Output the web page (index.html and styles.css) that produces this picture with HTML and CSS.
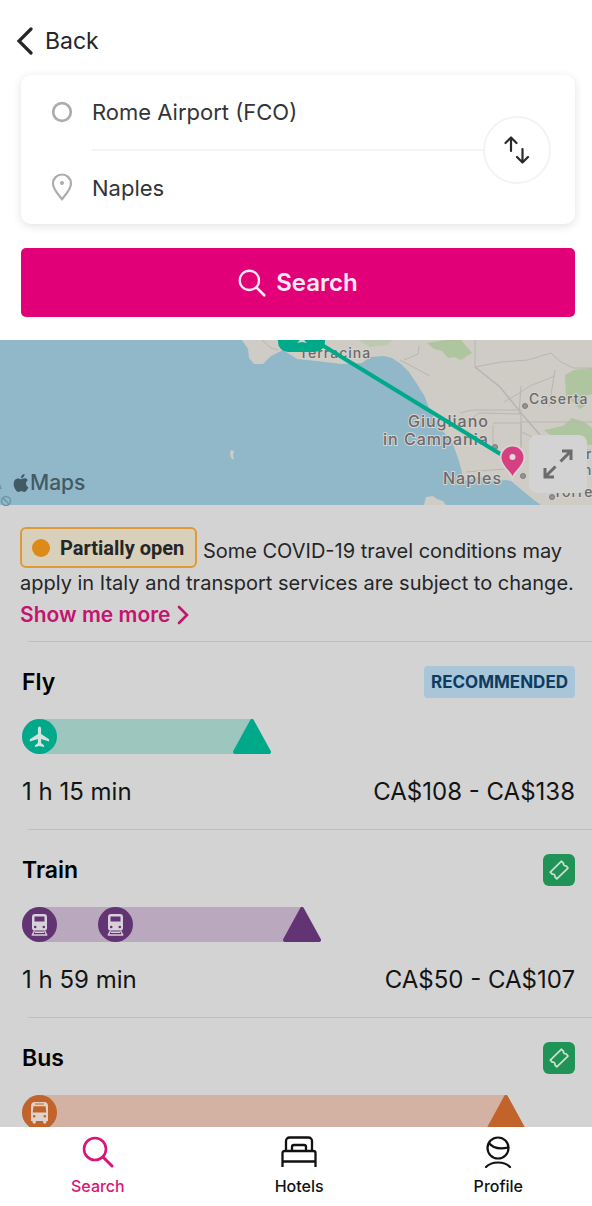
FILE: index.html
```html
<!DOCTYPE html>
<html lang="en">
<head>
    <meta charset="UTF-8">
    <meta name="viewport" content="width=device-width, initial-scale=1.0">
    <title>Rome Airport (FCO) to Naples</title>
    <link rel="stylesheet" href="styles.css">
</head>
<body>

<!-- shared icons -->
<svg class="sprite" aria-hidden="true">
    <symbol id="icon-search" viewBox="0 0 32 32">
        <circle cx="13" cy="13" r="11" fill="none" stroke="currentColor" stroke-width="2.6"/>
        <path d="M21 21l9 9" fill="none" stroke="currentColor" stroke-width="3" stroke-linecap="round"/>
    </symbol>
    <symbol id="icon-train" viewBox="0 0 35 35">
        <circle cx="17.5" cy="17.5" r="17.5" fill="#633473"/>
        <path fill="#d8d0da" fill-rule="evenodd" d="M13 7h9a3 3 0 0 1 3 3v11a2.500 2.500 0 0 1-2.500 2.500h-10a2.500 2.500 0 0 1-2.500-2.500v-11a3 3 0 0 1 3-3zM12.500 9.500v5h10v-5zM13.200 18.700a1.300 1.300 0 1 0 0 2.600 1.300 1.300 0 1 0 0-2.600zM21.800 18.700a1.300 1.300 0 1 0 0 2.600 1.300 1.300 0 1 0 0-2.600z"/>
        <path d="M12.500 23.500l-2.500 5M22.500 23.500l2.500 5M13 25.300h9M10 28h15" fill="none" stroke="#d8d0da" stroke-width="1.400"/>
    </symbol>
    <symbol id="icon-ticket" viewBox="0 0 32 32">
        <rect width="32" height="32" rx="6" fill="#209457"/>
        <path d="M18.500 7.200l2 2.200c-.3 1.600 1 2.900 2.800 2.500l1.700 2.200-11.200 10.700-1.900-2c.4-1.700-1-3-2.700-2.600l-1.900-2z" fill="none" stroke="#c8e3cf" stroke-width="1.700" stroke-linejoin="round"/>
    </symbol>
    <symbol id="icon-arrive" viewBox="0 0 38 35">
        <path d="M19 2L36 33H2z" fill="currentColor" stroke="currentColor" stroke-width="4" stroke-linejoin="round"/>
    </symbol>
</svg>

<div class="app">
    <header class="search-panel">
        <a class="back" href="#">
            <svg width="18" height="28" viewBox="0 0 18 28"><path d="M15 2L3 14l12 12" fill="none" stroke="currentColor" stroke-width="3.200" stroke-linecap="round"/></svg>
            Back
        </a>

        <form onsubmit="return false">
            <div class="places">
                <div class="place">
                    <label for="origin" aria-label="From">
                        <svg width="22" height="26" viewBox="0 0 22 26"><circle cx="11" cy="13" r="8.800" fill="none" stroke="#acacac" stroke-width="2.700"/></svg>
                    </label>
                    <input type="text" id="origin" value="Rome Airport (FCO)">
                </div>
                <div class="place">
                    <label for="destination" aria-label="To">
                        <svg width="22" height="28" viewBox="0 0 22 28"><path d="M11 26.300C8 22 2 16.500 2 10.500a9 9 0 0 1 18 0c0 6-6 11.500-9 15.800z" fill="none" stroke="#acacac" stroke-width="2.200" stroke-linejoin="round"/><circle cx="11" cy="10" r="2" fill="#acacac"/></svg>
                    </label>
                    <input type="text" id="destination" value="Naples">
                </div>
                <button class="swap" type="button" aria-label="Swap places">
                    <svg width="26" height="28" viewBox="0 0 26 28"><path d="M7 15V2M1.500 7L7 1.500 12.500 7M18.500 13v13M13 21l5.500 5.500L24 21" fill="none" stroke="#272b2d" stroke-width="2.200" stroke-linecap="round" stroke-linejoin="round"/></svg>
                </button>
            </div>
            <button class="search-btn" type="submit">
                <svg width="28" height="28"><use href="#icon-search"/></svg>
                Search
            </button>
        </form>
    </header>

    <main>
        <section class="map">
            <svg class="map-canvas" viewBox="0 0 592 165" preserveAspectRatio="xMaxYMid slice">
                <rect width="592" height="165" fill="#90b8c8"/>
                <g fill="#cfccc6">
                    <path d="M242 0l6 9 1 9 5 6h9l8-8 12-6 14 9 20 2 24 3 21-1 8-6 14-1 8 2 9 6 8 8 8 12 8 13 5 14 11 18 11 13 6 16 4 14 1 9 9-2 12-3 11 5 10-1 6 1 12 10 11 9 11 8h50V0z"/>
                    <path d="M424 165l2-8 7-1 4 3 6 2 3 4z"/>
                    <path d="M231 110l3 1-1 4 1 5-3-2-1-5z"/>
                </g>
                <g fill="#aec59f">
                    <path d="M427 3l18-3h16l5 6 6 7-11 7-7-3-6 1-6-7-8-2z"/>
                    <path d="M358 0h34l-4 5-18 2z" opacity=".5"/>
                    <path d="M565 35l9-5 18-2v26l-9 3 3 8-6 4-9-9-5-2z"/>
                    <path d="M544 90l19-4 9-8 12 4 8 6v17h-30z"/>
                </g>
                <g fill="none" stroke="#b9b5b2">
                    <path d="M475 0v27l25 20 22 27 18 21 26 15M475 27l26-5 27-2 23-7 10 9 12 6h19M521 46l-2 28M555 30l-6 37M504 62l14-8 12-8 25-10M521 74v52l-12 3M493 83h28v28M493 85v27h19M521 82h71M522 92l30 15 40 3M460 73l12-3h50M404 20l14-6 1-8M262 0l9 8 7 2M400 20l30 16M466 132l40-3M463 85l16-12 42 1M531 98v36" stroke-width="1"/>
                    <path d="M475 27l25 20 22 27M540 95l-18-21" stroke-width="1.600"/>
                </g>
                <g fill="#969492" stroke="#7c7a79" stroke-width="1">
                    <circle cx="525" cy="66" r="2.500"/>
                    <circle cx="495" cy="107" r="2.500"/>
                    <circle cx="523" cy="136" r="2.500"/>
                    <circle cx="552" cy="157" r="2.500"/>
                </g>
                <g class="map-labels">
                    <text class="small" x="299" y="18">Terracina</text>
                    <text class="small" x="529" y="64">Caserta</text>
                    <text x="408" y="87">Giugliano</text>
                    <text x="383" y="105">in Campania</text>
                    <text x="443" y="144">Naples</text>
                    <text class="small" x="586" y="119">r</text>
                    <text class="small" x="583" y="135">n</text>
                    <text class="small" x="553" y="157">Torre</text>
                </g>
                <path d="M322 5L502 115" stroke="#00a98a" stroke-width="4"/>
                <rect x="278" y="-20" width="47" height="32" rx="10" fill="#00a98a"/>
                <path d="M302-6l2 6 3 3-5-1-5 1 3-3z" fill="#d3d3d3"/>
                <path d="M512.500 136c-2-5-11-11-11-18.500a11 11 0 0 1 22 0c0 7.500-9 13.500-11 18.500z" fill="#d63f80" stroke="#d7d3d3" stroke-width="4" paint-order="stroke"/>
                <circle cx="512.500" cy="117" r="3" fill="#e2d8dc"/>
            </svg>
            <div class="map-brand">
                <svg width="16" height="18" viewBox="2 0 20 24"><path fill="currentColor" d="M12.152 6.896c-.948 0-2.415-1.078-3.960-1.040-2.040.027-3.910 1.183-4.961 3.014-2.117 3.675-.546 9.103 1.519 12.090 1.013 1.454 2.208 3.090 3.792 3.039 1.520-.065 2.090-.987 3.935-.987 1.831 0 2.350.987 3.960.948 1.637-.026 2.676-1.480 3.676-2.948 1.156-1.688 1.636-3.325 1.662-3.415-.039-.013-3.182-1.221-3.220-4.857-.026-3.040 2.480-4.494 2.597-4.559-1.429-2.090-3.623-2.324-4.390-2.376-2-.156-3.675 1.090-4.610 1.090zM15.530 3.830c.843-1.012 1.400-2.427 1.245-3.830-1.207.052-2.662.805-3.532 1.818-.780.896-1.454 2.338-1.273 3.714 1.338.104 2.715-.688 3.559-1.701"/></svg>
                Maps
            </div>
            <svg class="map-legal" width="12" height="24" viewBox="0 0 12 24"><path d="M0 2l2 5H0z" fill="#6f95a6"/><circle cx="6" cy="19" r="4.500" fill="none" stroke="#6f95a6" stroke-width="1.500"/><path d="M3 16l6 6" stroke="#6f95a6" stroke-width="1.500"/></svg>
            <button class="expand" type="button" aria-label="Expand map">
                <svg width="30" height="30" viewBox="0 0 30 30"><path d="M17.500 12.500L27.500 2.500M19 2h9v9M12.500 17.500L2.500 27.500M2 19v9h9" fill="none" stroke="currentColor" stroke-width="3"/></svg>
            </button>
        </section>

        <section class="notice">
            <p><span class="status">Partially open</span> Some COVID-19 travel conditions may apply in Italy and transport services are subject to change.</p>
            <a href="#">Show me more <svg width="12" height="20" viewBox="0 0 12 20"><path d="M2 2l8 8-8 8" fill="none" stroke="currentColor" stroke-width="2.600" stroke-linecap="round"/></svg></a>
        </section>

        <section class="route fly">
            <div class="row">
                <h2>Fly</h2>
                <span class="tag">RECOMMENDED</span>
            </div>
            <div class="bar" style="width: 45%">
                <div class="track">
                    <svg width="35" height="35" viewBox="0 0 35 35"><circle cx="17.500" cy="17.500" r="17.500" fill="#00a98a"/><path fill="#d6e2dd" d="M17.500 7.500c1 0 1.600 1.200 1.600 2.600v5l8 5.200v2.200l-8-2.600v4.200l3 2.400v1.400l-4.600-1-4.600 1v-1.400l3-2.400v-4.200l-8 2.600v-2.200l8-5.200v-5c0-1.400.6-2.600 1.600-2.600z"/></svg>
                </div>
                <svg class="arrive" width="38" height="35"><use href="#icon-arrive"/></svg>
            </div>
            <div class="row">
                <span>1 h 15 min</span>
                <span>CA$108 - CA$138</span>
            </div>
        </section>

        <section class="route train">
            <div class="row">
                <h2>Train</h2>
                <svg width="32" height="32"><use href="#icon-ticket"/></svg>
            </div>
            <div class="bar" style="width: 54%">
                <div class="track">
                    <svg width="35" height="35"><use href="#icon-train"/></svg>
                    <svg width="35" height="35"><use href="#icon-train"/></svg>
                </div>
                <svg class="arrive" width="38" height="35"><use href="#icon-arrive"/></svg>
            </div>
            <div class="row">
                <span>1 h 59 min</span>
                <span>CA$50 - CA$107</span>
            </div>
        </section>

        <section class="route bus">
            <div class="row">
                <h2>Bus</h2>
                <svg width="32" height="32"><use href="#icon-ticket"/></svg>
            </div>
            <div class="bar" style="width: 91%">
                <div class="track">
                    <svg width="35" height="35" viewBox="0 0 35 35"><circle cx="17.500" cy="17.500" r="17.500" fill="#c1632b"/><path fill="#ddd3cb" fill-rule="evenodd" d="M13 7h9c2.500 0 4 1.500 4 4v15h-1.500v1a1.700 1.700 0 0 1-3.400 0v-1h-7.200v1a1.700 1.700 0 0 1-3.400 0v-1H9V11c0-2.500 1.500-4 4-4zM13 8.500v1h9v-1zM11.500 11.200l-.8 6.300h13.600l-.8-6.300zM12.200 20a1.300 1.300 0 1 0 0 2.600 1.300 1.300 0 1 0 0-2.600zM22.800 20a1.300 1.300 0 1 0 0 2.600 1.300 1.300 0 1 0 0-2.600z"/></svg>
                </div>
                <svg class="arrive" width="38" height="35"><use href="#icon-arrive"/></svg>
            </div>
        </section>
    </main>

    <nav class="tabs">
        <a class="active" href="#">
            <svg width="32" height="32"><use href="#icon-search"/></svg>
            Search
        </a>
        <a href="#">
            <svg width="36" height="32" viewBox="0 0 36 32"><path d="M1.500 31V17a2 2 0 0 1 2-2h29a2 2 0 0 1 2 2v14M1.500 25.500h33M5 15V5a3.500 3.500 0 0 1 3.500-3.500h19A3.500 3.500 0 0 1 31 5v10M11 15v-4a2 2 0 0 1 2-2h10a2 2 0 0 1 2 2v4" fill="none" stroke="currentColor" stroke-width="2.300"/></svg>
            Hotels
        </a>
        <a href="#">
            <svg width="28" height="32" viewBox="0 0 28 32"><g fill="none" stroke="currentColor" stroke-width="2.200" stroke-linecap="round"><circle cx="14" cy="12" r="10.500"/><path d="M5 7c4 5.500 12 6 19.200 4.500M2 31c6-6 18-6 24 0"/></g></svg>
            Profile
        </a>
    </nav>
</div>

</body>
</html>
```

FILE: styles.css
```css
* {
    box-sizing: border-box;
}

body {
    font-family: Inter, "Liberation Sans", sans-serif;
    background-color: #fff;
    color: #242628;
    margin: 0;
}

svg {
    display: block;
    flex: none;
}

a {
    color: inherit;
    text-decoration: none;
}

button {
    font-family: inherit;
    cursor: pointer;
}

.sprite {
    position: absolute;
    width: 0;
    height: 0;
}

.app {
    display: flex;
    flex-direction: column;
    height: 100vh;
}

/* search panel */
.search-panel {
    padding: 24px 17px 23px 21px;
}

.back {
    display: flex;
    align-items: center;
    gap: 11px;
    width: fit-content;
    height: 34px;
    margin-left: -5px;
    font-size: 23px;
}

.places {
    position: relative;
    margin: 17px 0 24px;
    background-color: #fff;
    border-radius: 10px;
    box-shadow: 0 2px 10px rgba(0, 0, 0, 0.12);
}

.place {
    display: flex;
    align-items: center;
    gap: 19px;
    height: 74px;
    padding: 0 92px 0 30px;
}

.place input {
    flex: 1;
    min-width: 0;
    height: 100%;
    padding: 0;
    border: none;
    outline: none;
    background: none;
    font-family: inherit;
    font-size: 22px;
    color: #333537;
}

.place + .place {
    height: 75px;
}

.place + .place input {
    border-top: 2px solid #f3f3f3;
}

.swap {
    position: absolute;
    top: 41px;
    right: 24px;
    display: flex;
    align-items: center;
    justify-content: center;
    width: 68px;
    height: 68px;
    padding: 0;
    border: 2px solid #f3f3f3;
    border-radius: 50%;
    background-color: #fff;
}

.search-btn {
    display: flex;
    align-items: center;
    justify-content: center;
    gap: 10px;
    width: 100%;
    height: 69px;
    border: none;
    border-radius: 5px;
    background-color: #e10078;
    color: #ffe9f6;
    font-size: 24px;
    font-weight: 600;
}

/* results under the panel */
main {
    flex: 1;
    min-height: 0;
    overflow: hidden;
    background-color: #d3d3d3;
}

.map {
    position: relative;
    height: 165px;
}

.map-canvas {
    width: 100%;
    height: 100%;
}

.map-labels text {
    font-size: 16px;
    font-weight: 500;
    letter-spacing: 1px;
    fill: #6b6b6c;
    stroke: #d6d3d0;
    stroke-width: 2px;
    paint-order: stroke;
}

.map-labels .small {
    font-size: 14px;
}

.map-brand {
    position: absolute;
    left: 13px;
    bottom: 10px;
    display: flex;
    align-items: center;
    gap: 1px;
    font-size: 21px;
    font-weight: 500;
    color: #435a65;
}

.map-legal {
    position: absolute;
    left: 0;
    bottom: -1px;
}

.expand {
    position: absolute;
    right: 5px;
    bottom: 12px;
    display: flex;
    align-items: center;
    justify-content: center;
    width: 58px;
    height: 58px;
    padding: 0;
    border: none;
    border-radius: 8px;
    background-color: #d3d3d3;
    color: #6b6b6b;
}

.notice {
    padding: 22px 16px 10px 20px;
    font-size: 20px;
    line-height: 32px;
}

.notice p {
    margin: 0;
}

.notice a {
    display: flex;
    align-items: center;
    gap: 6px;
    font-size: 21px;
    font-weight: 600;
    color: #c4146f;
}

.status {
    display: inline-flex;
    align-items: center;
    gap: 10px;
    height: 41px;
    margin-bottom: -2px;
    padding: 0 11px 0 10px;
    border: 2px solid #dc9a38;
    border-radius: 6px;
    background-color: #d8d0bb;
    font-family: Roboto, sans-serif;
    font-weight: 700;
    vertical-align: 1px;
}

.status::before {
    content: "";
    width: 18px;
    height: 18px;
    border-radius: 50%;
    background-color: #dc8a18;
}

.route {
    padding: 0 17px 21px 22px;
    font-size: 24px;
    line-height: 32px;
    color: #141414;
}

.route::before {
    content: "";
    display: block;
    height: 1px;
    margin: 0 -17px 24px 6px;
    background-color: #bfbfbf;
}

.row {
    display: flex;
    align-items: center;
    justify-content: space-between;
}

.row h2 {
    margin: 0;
    font-size: 23px;
    font-weight: 600;
    color: #000;
}

.tag {
    padding: 0 7px;
    border-radius: 4px;
    background-color: #a9c5d8;
    font-size: 17px;
    font-weight: 700;
    color: #0d3c60;
}

.bar {
    display: flex;
    margin: 21px 0 22px;
}

.track {
    display: flex;
    flex: 1;
    gap: 41px;
    margin-right: -19px;
    border-radius: 18px 0 0 18px;
}

.fly .track {
    background-color: #9dc7be;
}

.train .track {
    background-color: #b9a8be;
}

.bus .track {
    background-color: #d3b2a3;
}

.fly .arrive {
    color: #00a98a;
}

.train .arrive {
    color: #633473;
}

.bus .arrive {
    color: #c1632b;
}

/* bottom tabs */
.tabs {
    display: flex;
    justify-content: space-between;
    height: 79px;
    padding: 9px 69px 0 71px;
    background-color: #fff;
}

.tabs a {
    display: flex;
    flex-direction: column;
    align-items: center;
    gap: 8px;
    font-size: 16px;
    font-weight: 500;
    line-height: 20px;
    color: #111;
}

.tabs .active {
    color: #d91478;
}
```
